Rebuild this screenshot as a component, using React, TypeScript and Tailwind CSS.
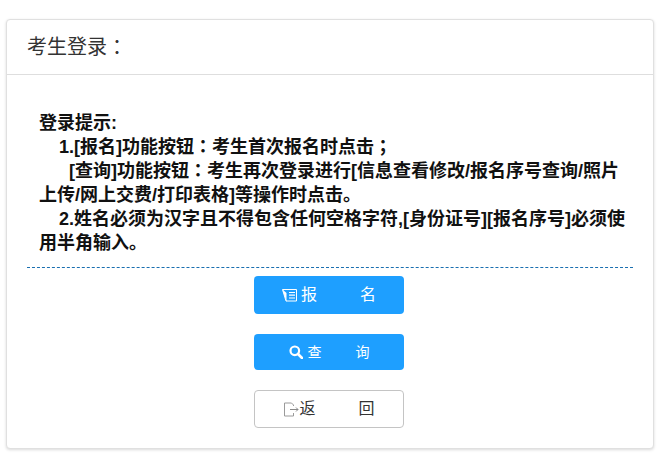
const FONT = "font-['Liberation_Sans','Noto_Sans_CJK_SC',sans-serif]";
const PUNCT = "font-['Noto_Sans_CJK_TC',sans-serif] leading-none";

function FormIcon() {
  return (
    <svg width="15" height="13" viewBox="0 0 15 13" fill="none" className="mr-[4px] shrink-0">
      <path d="M0.5 0.5h14v11.5H4z" stroke="#fff" strokeWidth="1" />
      <path d="M0.5 0.5l4 12.5V4z" fill="#fff" />
      <path d="M7 3.5h6M7 6.2h6M7 9h6" stroke="#fff" strokeWidth="1.2" />
    </svg>
  );
}

function SearchIcon() {
  return (
    <svg width="14" height="14" viewBox="0 0 14 14" fill="none" className="mr-[5px] shrink-0">
      <circle cx="5.8" cy="5.8" r="4.3" stroke="#fff" strokeWidth="2.2" />
      <path d="M9 9l4 4" stroke="#fff" strokeWidth="2.6" strokeLinecap="round" />
    </svg>
  );
}

function ExitIcon() {
  return (
    <svg width="16" height="15" viewBox="0 0 16 15" fill="none" className="shrink-0">
      <path d="M10.5 4V3L8.5 1H1.5v13h9v-3" stroke="#9a9a9a" strokeWidth="1" />
      <path d="M7 7.5h8M13 5.5l2 2-2 2" stroke="#888" strokeWidth="1" />
    </svg>
  );
}

export default function App() {
  return (
    <div className={`${FONT} h-[455px] w-[661px] overflow-hidden bg-white px-[6px] pt-[19px]`}>
      <div className="h-[430px] w-[648px] rounded-[4px] border border-[#e0e0e0] bg-white shadow-[0_1px_3px_rgba(0,0,0,0.15)]">
        <div className="flex h-[55px] items-center border-b border-[#dedede] pl-5 text-[20px] text-[#333]">
          考生登录<span className={PUNCT}>：</span>
        </div>
        <div className="px-5 pt-[37px]">
          <div className="border-b border-dashed border-[#1a6fb0] pb-[12px] pl-3 text-[18px] leading-[23.9px] font-bold text-[#111]">
            <p>登录提示:</p>
            <p className="indent-[20px]">1.[报名]功能按钮<span className={PUNCT}>：</span>考生首次报名时点击<span className={PUNCT}>；</span></p>
            <p className="indent-[30px]">[查询]功能按钮<span className={PUNCT}>：</span>考生再次登录进行[信息查看修改/报名序号查询/照片上传/网上交费/打印表格]等操作时点击。</p>
            <p className="indent-[20px]">2.姓名必须为汉字且不得包含任何空格字符,[身份证号][报名序号]必须使用半角输入。</p>
          </div>
          <div className="flex flex-col items-center pt-2 pr-[2px]">
            <button type="button" className="flex h-[38px] w-[150px] items-center justify-center rounded-[4px] bg-[#1e9fff] text-[16px] text-white">
              <FormIcon />
              <span>报</span>
              <span className="ml-[43px]">名</span>
            </button>
            <button type="button" className="mt-5 flex h-[36px] w-[150px] items-center justify-center rounded-[4px] bg-[#1e9fff] text-[14px] text-white">
              <SearchIcon />
              <span>查</span>
              <span className="ml-[34px]">询</span>
            </button>
            <button type="button" className="mt-5 flex h-[38px] w-[150px] items-center justify-center rounded-[4px] border border-[#c4c4c4] bg-white text-[16px] text-[#333]">
              <ExitIcon />
              <span>返</span>
              <span className="ml-[43px]">回</span>
            </button>
          </div>
        </div>
      </div>
    </div>
  );
}
